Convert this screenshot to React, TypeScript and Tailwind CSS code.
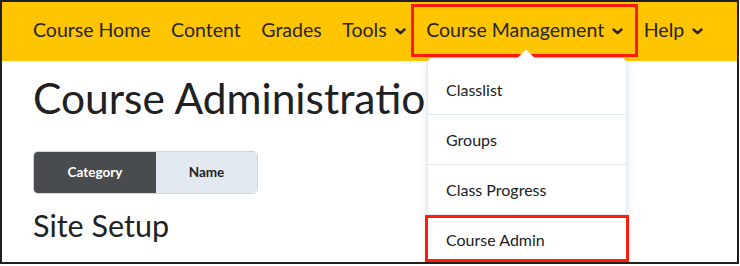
const navItems = [
  { label: "Course Home" },
  { label: "Content" },
  { label: "Grades" },
  { label: "Tools", menu: true },
  { label: "Course Management", menu: true, marked: true },
  { label: "Help", menu: true },
];

const menuItems = ["Classlist", "Groups", "Class Progress", "Course Admin"];

function Chevron() {
  return (
    <svg width="11" height="7" viewBox="0 0 11 7" className="ml-[8px] mt-[2px]">
      <path d="M1.5 1.5 L5.5 5.2 L9.5 1.5" fill="none" stroke="#262626" strokeWidth="2.5" strokeLinecap="round" strokeLinejoin="round" />
    </svg>
  );
}

export default function App() {
  return (
    <div className="w-[740px] h-[266px] bg-white" style={{ fontFamily: "Lato, 'Open Sans', sans-serif" }}>
      <div className="relative w-[739px] h-[264px] border-2 border-[#1f1f1f] overflow-hidden">
        {/* top nav */}
        <nav className="h-[59px] bg-[#ffc500] flex items-center pl-[31px] pb-[3px] gap-[20.6px] text-[19.5px] text-[#262626]">
          {navItems.map((item) => (
            <div key={item.label} className="relative flex items-center">
              <span>{item.label}</span>
              {item.menu && <Chevron />}
              {item.marked && (
                <span className="absolute -left-[15px] -right-[15px] -top-[11px] -bottom-[12px] border-[3px] border-[#ff1a0a]" />
              )}
            </div>
          ))}
        </nav>

        {/* page body */}
        <div className="pl-[31px] pt-[12px]">
          <h1 className="text-[42.5px] leading-[50px] text-[#202122] whitespace-nowrap">Course Administration</h1>
          <div className="mt-[28px] flex w-[225px] h-[43px] rounded-[5px] overflow-hidden border border-[#cdd5dc] text-[13.5px] font-bold">
            <div className="w-[122px] bg-[#494c4e] text-white flex items-center justify-center">Category</div>
            <div className="flex-1 bg-[#e3e9f1] text-[#202122] flex items-center justify-center">Name</div>
          </div>
          <h2 className="mt-[11px] text-[30.5px] leading-[40px] text-[#202122]">Site Setup</h2>
        </div>

        {/* dropdown */}
        <div className="absolute left-[425px] top-[56px] w-[200px] bg-white border border-[#e3e9f1] rounded-[5px] shadow-[0_2px_8px_rgba(0,0,0,0.12)] pt-[6px]">
          <div className="absolute left-[92px] -top-[7px] w-[12px] h-[12px] bg-white rotate-45 border-l border-t border-[#e3e9f1]" />
          {menuItems.map((m, i) => (
            <div
              key={m}
              className={`relative h-[50px] flex items-center pl-[18px] text-[16px] text-[#202122] ${i < menuItems.length - 1 ? "border-b border-[#e3e9f1]" : ""}`}
            >
              {m}
              {m === "Course Admin" && (
                <span className="absolute -left-[3px] -right-[3px] top-0 h-[47px] border-[3px] border-[#ff1a0a]" />
              )}
            </div>
          ))}
        </div>
      </div>
    </div>
  );
}
